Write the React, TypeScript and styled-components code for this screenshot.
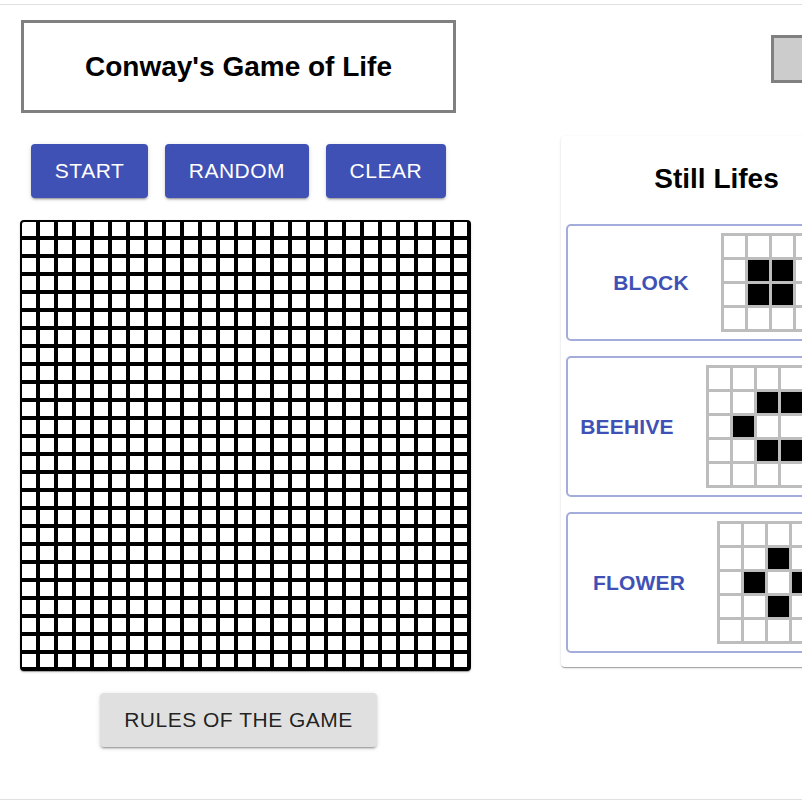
import React from "react";
import styled, { createGlobalStyle } from "styled-components";

const GlobalStyle = createGlobalStyle`
  html, body {
    margin: 0;
    padding: 0;
    background: #ffffff;
    overflow: hidden;
    font-family: "Liberation Sans", Arial, sans-serif;
  }
`;

const Page = styled.div`
  padding-top: 4px;
  width: 802px;
  height: 802px;
  box-sizing: border-box;
`;

const Frame = styled.div`
  height: 796px;
  box-sizing: border-box;
  border-top: 1px solid #e0e0e0;
  border-bottom: 1px solid #e0e0e0;
  display: flex;
  flex-direction: row;
  align-items: flex-start;
  overflow: hidden;
`;

const LeftColumn = styled.div`
  flex-shrink: 0;
  width: 435px;
  margin-left: 21px;
  margin-top: 15px;
  display: flex;
  flex-direction: column;
  align-items: center;
`;

const TitleBox = styled.div`
  width: 100%;
  height: 93px;
  box-sizing: border-box;
  border: 3px solid #808080;
  display: flex;
  align-items: center;
  justify-content: center;
`;

const Title = styled.h1`
  margin: 0;
  font-size: 28px;
  line-height: 32px;
  font-weight: 700;
  color: #000;
`;

const ButtonRow = styled.div`
  margin-top: 31px;
  display: flex;
  gap: 16.5px;
`;

const Button = styled.button<{ $variant?: "primary" | "grey" }>`
  height: 54px;
  padding: 0 24px;
  border: none;
  border-radius: 4px;
  font-family: "Liberation Sans", Arial, sans-serif;
  font-size: 21px;
  letter-spacing: 0.5px;
  text-transform: uppercase;
  cursor: pointer;
  background: ${(p) => (p.$variant === "grey" ? "#e0e0e0" : "#3f51b5")};
  color: ${(p) => (p.$variant === "grey" ? "rgba(0,0,0,0.87)" : "#ffffff")};
  box-shadow: 0px 3px 1px -2px rgba(0, 0, 0, 0.2),
    0px 2px 2px 0px rgba(0, 0, 0, 0.14), 0px 1px 5px 0px rgba(0, 0, 0, 0.12);
`;

const Board = styled.div`
  align-self: flex-start;
  margin-left: -1px;
  margin-top: 22px;
  width: 451px;
  height: 451px;
  box-sizing: border-box;
  background: #000;
  border-style: solid;
  border-color: #000;
  border-width: 2px 4px 4px 2px;
  border-radius: 4px;
  overflow: hidden;
  box-shadow: 0px 2px 1px -1px rgba(0, 0, 0, 0.2),
    0px 1px 1px 0px rgba(0, 0, 0, 0.14), 0px 1px 3px 0px rgba(0, 0, 0, 0.12);
`;

const BoardGrid = styled.div`
  display: grid;
  grid-template-columns: repeat(25, 14px);
  grid-auto-rows: 14px;
  gap: 4px;
`;

const Cell = styled.div<{ $alive?: boolean }>`
  background: ${(p) => (p.$alive ? "#000" : "#fff")};
`;

const RulesWrap = styled.div`
  margin-top: 22px;
`;

const RightArea = styled.div`
  flex-shrink: 0;
  margin-left: 105px;
  display: flex;
  flex-direction: column;
`;

const GreyBox = styled.div`
  margin-top: 30px;
  margin-left: 210px;
  width: 220px;
  height: 48px;
  box-sizing: border-box;
  border: 3px solid #808080;
  background: #cccccc;
`;

const Panel = styled.div`
  margin-top: 53px;
  width: 311px;
  padding: 27px 5px 14px;
  box-sizing: border-box;
  background: #fff;
  border-radius: 4px;
  box-shadow: 0px 2px 1px -1px rgba(0, 0, 0, 0.2),
    0px 1px 1px 0px rgba(0, 0, 0, 0.14), 0px 1px 3px 0px rgba(0, 0, 0, 0.12);
  display: flex;
  flex-direction: column;
`;

const PanelTitle = styled.h2`
  margin: 0 0 29px;
  text-align: center;
  font-size: 28px;
  line-height: 32px;
  font-weight: 700;
  color: #000;
`;

const PatternList = styled.div`
  display: flex;
  flex-direction: column;
  gap: 15px;
`;

const PatternCard = styled.div`
  border: 2px solid #a4acdc;
  border-radius: 5px;
  padding: 7px;
  display: flex;
  align-items: center;
  justify-content: center;
  gap: 32px;
`;

const PatternLabel = styled.span`
  font-size: 21px;
  font-weight: 700;
  letter-spacing: 0.2px;
  color: #3f51b5;
  text-transform: uppercase;
`;

const PatternGrid = styled.div<{ $cols: number }>`
  flex-shrink: 0;
  display: grid;
  grid-template-columns: repeat(${(p) => p.$cols}, 21px);
  grid-auto-rows: 21px;
  gap: 3px;
  padding: 3px;
  background: #bdbdbd;
`;

type Pattern = { name: string; rows: string[] };

const patterns: Pattern[] = [
  { name: "Block", rows: ["....", ".##.", ".##.", "...."] },
  {
    name: "Beehive",
    rows: ["......", "..##..", ".#..#.", "..##..", "......"],
  },
  { name: "Flower", rows: [".....", "..#..", ".#.#.", "..#..", "....."] },
];

const boardCells = Array.from({ length: 625 }, (_, i) => i);

export default function App() {
  return (
    <>
      <GlobalStyle />
      <Page>
        <Frame>
          <LeftColumn>
            <TitleBox>
              <Title>Conway's Game of Life</Title>
            </TitleBox>
            <ButtonRow>
              <Button>Start</Button>
              <Button>Random</Button>
              <Button>Clear</Button>
            </ButtonRow>
            <Board>
              <BoardGrid>
                {boardCells.map((i) => (
                  <Cell key={i} />
                ))}
              </BoardGrid>
            </Board>
            <RulesWrap>
              <Button $variant="grey">Rules of the game</Button>
            </RulesWrap>
          </LeftColumn>
          <RightArea>
            <GreyBox />
            <Panel>
              <PanelTitle>Still Lifes</PanelTitle>
              <PatternList>
                {patterns.map((p) => (
                  <PatternCard key={p.name}>
                    <PatternLabel>{p.name}</PatternLabel>
                    <PatternGrid $cols={p.rows[0].length}>
                      {p.rows.flatMap((r, ri) =>
                        r
                          .split("")
                          .map((c, ci) => (
                            <Cell key={`${ri}-${ci}`} $alive={c === "#"} />
                          ))
                      )}
                    </PatternGrid>
                  </PatternCard>
                ))}
              </PatternList>
            </Panel>
          </RightArea>
        </Frame>
      </Page>
    </>
  );
}
